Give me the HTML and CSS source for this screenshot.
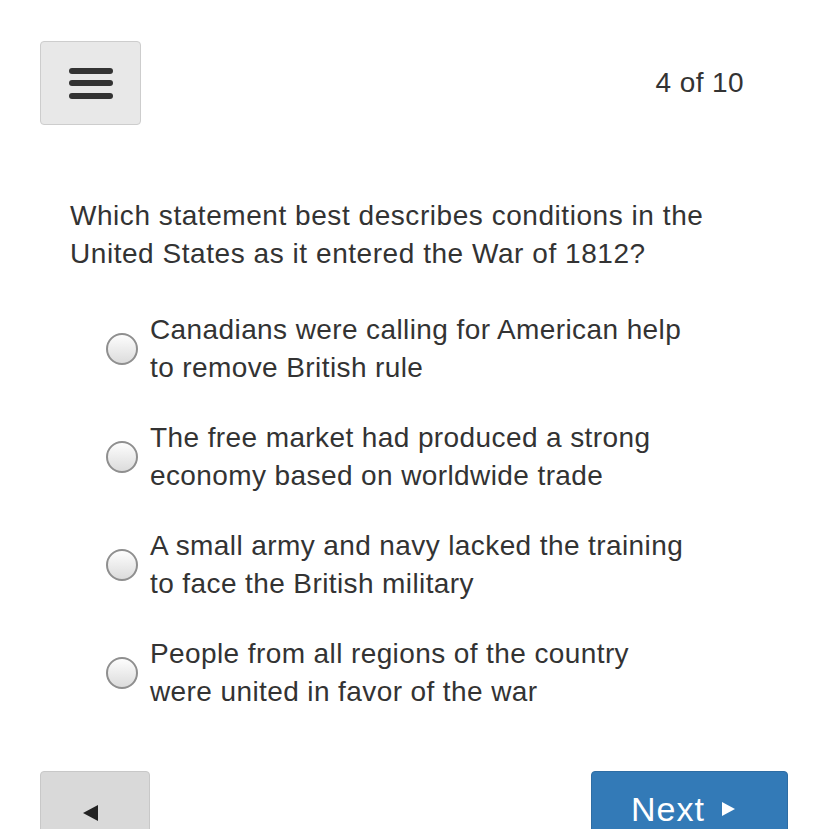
FILE: index.html
```html
<!DOCTYPE html>
<html>
<head>
<meta charset="utf-8">
<link rel="stylesheet" href="styles.css">
</head>
<body>
<div class="page">
  <header class="top">
    <button class="menu-btn" aria-label="Menu">
      <span class="bar"></span><span class="bar"></span><span class="bar"></span>
    </button>
    <div class="counter">4 of 10</div>
  </header>
  <p class="question">Which statement best describes conditions in the<br>United States as it entered the War of 1812?</p>
  <ul class="options">
    <li class="option"><span class="radio"></span><span class="label">Canadians were calling for American help<br>to remove British rule</span></li>
    <li class="option"><span class="radio"></span><span class="label">The free market had produced a strong<br>economy based on worldwide trade</span></li>
    <li class="option"><span class="radio"></span><span class="label">A small army and navy lacked the training<br>to face the British military</span></li>
    <li class="option"><span class="radio"></span><span class="label">People from all regions of the country<br>were united in favor of the war</span></li>
  </ul>
  <footer class="nav">
    <button class="back-btn"><span class="tri-left"></span></button>
    <button class="next-btn"><span class="next-text">Next</span><span class="tri-right"></span></button>
  </footer>
</div>
</body>
</html>
```
FILE: styles.css
```css
html, body {
  margin: 0;
  padding: 0;
  background: #fff;
  overflow: hidden;
}
body {
  font-family: "Liberation Sans", Arial, sans-serif;
  color: #333;
}
.page {
  padding: 41px 40px 0 40px;
}
.top {
  display: flex;
  align-items: center;
  justify-content: space-between;
  padding-right: 44px;
}
.menu-btn {
  width: 101px;
  height: 84px;
  box-sizing: border-box;
  background: #e8e8e8;
  border: 1px solid #cdcdcd;
  border-radius: 4px;
  display: flex;
  flex-direction: column;
  align-items: center;
  justify-content: center;
  gap: 6.5px;
  padding: 0;
}
.bar {
  display: block;
  width: 44px;
  height: 6px;
  border-radius: 3px;
  background: #333;
}
.counter {
  font-size: 28px;
  line-height: 30px;
  letter-spacing: 0.4px;
}
.question {
  margin: 72px 0 0 30px;
  font-size: 28px;
  line-height: 38px;
  letter-spacing: 0.55px;
}
.options {
  list-style: none;
  margin: 38px 0 0 0;
  padding: 0 0 0 66px;
  display: flex;
  flex-direction: column;
  gap: 32px;
}
.option {
  display: flex;
  align-items: center;
  gap: 12px;
}
.radio {
  width: 32px;
  height: 32px;
  box-sizing: border-box;
  border-radius: 50%;
  border: 2px solid #8f8f8f;
  background: linear-gradient(#fdfdfd, #dcdcdc);
  flex: none;
}
.label {
  font-size: 28px;
  line-height: 38px;
  letter-spacing: 0.4px;
}
.nav {
  display: flex;
  justify-content: space-between;
  margin-top: 60px;
}
.back-btn {
  width: 110px;
  height: 84px;
  box-sizing: border-box;
  background: #d9d9d9;
  border: 1px solid #c8c8c8;
  border-radius: 4px;
  display: flex;
  align-items: center;
  justify-content: center;
  padding: 0;
}
.tri-left {
  width: 0;
  height: 0;
  border-top: 8px solid transparent;
  border-bottom: 8px solid transparent;
  border-right: 15px solid #222;
  margin-right: 9px;
}
.next-btn {
  width: 197px;
  height: 76px;
  box-sizing: border-box;
  background: #337ab7;
  border: 1px solid #2e6da4;
  border-radius: 4px;
  color: #fff;
  font-family: "Liberation Sans", Arial, sans-serif;
  display: flex;
  align-items: center;
  justify-content: center;
  gap: 17px;
  padding: 0 13px 0 0;
}
.next-text {
  font-size: 34px;
  letter-spacing: 1px;
  line-height: 1;
}
.tri-right {
  width: 0;
  height: 0;
  border-top: 7px solid transparent;
  border-bottom: 7px solid transparent;
  border-left: 13px solid #fff;
}
```
